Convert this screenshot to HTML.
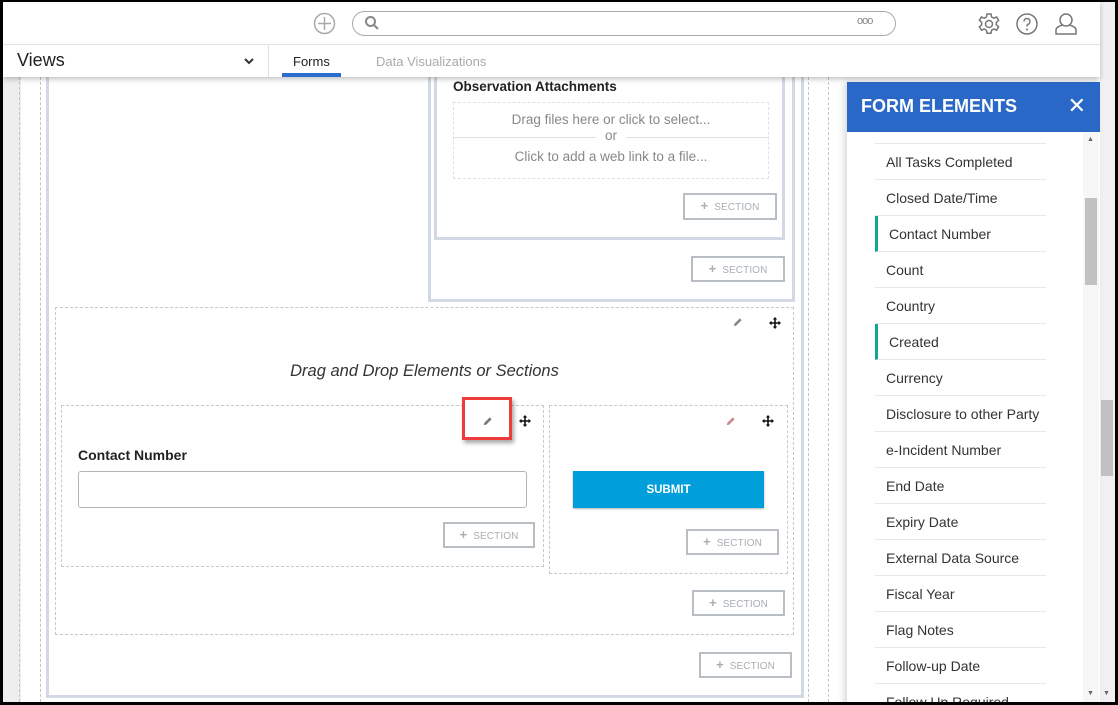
<!DOCTYPE html>
<html><head><meta charset="utf-8"><style>
*{box-sizing:border-box;margin:0;padding:0}
body{width:1118px;height:705px;overflow:hidden;background:#000;font-family:"Liberation Sans",sans-serif;position:relative}
.a{position:absolute}
.sec{position:absolute;border:2px solid #b9bec4;background:#fff;color:#a8aeb4;font-size:10px;text-align:center;line-height:22px;letter-spacing:.1px}
.sec b{font-size:13px;margin-right:6px;color:#a8aeb4}
.dash{position:absolute;border:1px dashed #c8c8c8}
.li{position:absolute;left:875px;width:171px;height:36px;border-bottom:1px solid #e8e8e8;font-size:14px;color:#333;padding-left:11px;line-height:37px}
.li.t{border-left:3px solid #13a58f;padding-left:11px}
</style></head><body>
<svg width="0" height="0" style="position:absolute"><defs>
<symbol id="pen" viewBox="0 0 12 12"><path d="M2 10l.6-2.6L8.5 1.5l2 2-5.9 5.9z" fill="currentColor"/></symbol>
<symbol id="mv" viewBox="0 0 12 12"><path d="M6 0l2.2 2.5H6.8v2.7h2.7V3.8L12 6 9.5 8.2V6.8H6.8v2.7h1.4L6 12 3.8 9.5h1.4V6.8H2.5v1.4L0 6l2.5-2.2v1.4h2.7V2.5H3.8z" fill="currentColor"/></symbol>
</defs></svg>
<div class="a" style="left:3px;top:2px;width:1112px;height:700px;background:#fff;overflow:hidden">
<div class="a" style="left:0;top:75px;width:18px;height:640px;background:#eeeeee"></div>
<div class="a" style="left:16px;top:75px;height:640px;border-left:1px dashed #c4c4c4"></div>
<div class="a" style="left:37px;top:75px;height:640px;border-left:1px dashed #c4c4c4"></div>
<div class="a" style="left:43px;top:60px;width:758px;height:636px;border:3px solid #d3d9e4;border-top:none"></div>
<div class="a" style="left:805px;top:75px;height:640px;border-left:1px dashed #c4c4c4"></div>
<div class="a" style="left:825px;top:75px;height:640px;border-left:1px dashed #c4c4c4"></div>
<div class="a" style="left:1097px;top:0;width:15px;height:700px;background:#f0f0f0"></div>
<div class="a" style="left:1098px;top:398px;width:12px;height:76px;background:#c1c1c1"></div>

<div class="a" style="left:425px;top:60px;width:367px;height:240px;border:3px solid #d3d9e4;border-top:none"></div>
<div class="a" style="left:431px;top:60px;width:351px;height:178px;border:3px solid #d3d9e4;border-top:none"></div>
<div class="a" style="left:450px;top:77px;font-size:13.5px;font-weight:bold;color:#222">Observation Attachments</div>
<div class="dash" style="left:450px;top:100px;width:316px;height:77px;border-color:#e2e2e2"></div>
<div class="a" style="left:450px;top:135px;width:316px;border-top:1px solid #e0e0e0"></div>
<div class="a" style="left:450px;top:110px;width:316px;text-align:center;font-size:13.5px;color:#888">Drag files here or click to select...</div>
<div class="a" style="left:593px;top:126px;width:30px;background:#fff;text-align:center;font-size:13.5px;color:#888">or</div>
<div class="a" style="left:450px;top:147px;width:316px;text-align:center;font-size:13.5px;color:#888">Click to add a web link to a file...</div>
<div class="sec" style="left:680px;top:191px;width:94px;height:27px"><b>+</b>SECTION</div>
<div class="sec" style="left:688px;top:254px;width:94px;height:26px"><b>+</b>SECTION</div>

<div class="dash" style="left:52px;top:305px;width:739px;height:328px"></div>
<svg class="a" style="left:729px;top:315px;color:#888" width="11" height="11"><use href="#pen"/></svg>
<svg class="a" style="left:766px;top:315px;color:#111" width="12" height="12"><use href="#mv"/></svg>
<div class="a" style="left:52px;top:360px;width:739px;text-align:center;font-size:16.5px;font-style:italic;color:#333">Drag and Drop Elements or Sections</div>
<div class="dash" style="left:58px;top:403px;width:483px;height:162px"></div>
<div class="dash" style="left:546px;top:403px;width:239px;height:169px"></div>
<div class="a" style="left:459px;top:395px;width:50px;height:43px;border:3px solid #ee3b3b;box-shadow:2px 3px 4px rgba(0,0,0,.35);background:#fff"></div>
<svg class="a" style="left:479px;top:414px;color:#777" width="11" height="11"><use href="#pen"/></svg>
<svg class="a" style="left:516px;top:413px;color:#111" width="12" height="12"><use href="#mv"/></svg>
<svg class="a" style="left:722px;top:414px;color:#c88" width="11" height="11"><use href="#pen"/></svg>
<svg class="a" style="left:759px;top:413px;color:#111" width="12" height="12"><use href="#mv"/></svg>
<div class="a" style="left:75px;top:445px;font-size:14px;font-weight:bold;color:#222">Contact Number</div>
<div class="a" style="left:75px;top:469px;width:449px;height:37px;border:1px solid #b5b5b5;border-radius:3px"></div>
<div class="sec" style="left:440px;top:520px;width:92px;height:26px"><b>+</b>SECTION</div>
<div class="a" style="left:570px;top:469px;width:191px;height:37px;background:#009fdb;color:#fff;font-weight:bold;font-size:11.5px;text-align:center;line-height:38px;box-shadow:0 1px 2px rgba(0,0,0,.3)">SUBMIT</div>
<div class="sec" style="left:683px;top:527px;width:93px;height:26px"><b>+</b>SECTION</div>
<div class="sec" style="left:689px;top:588px;width:93px;height:26px"><b>+</b>SECTION</div>
<div class="sec" style="left:696px;top:650px;width:93px;height:26px"><b>+</b>SECTION</div>

<div class="a" style="left:844px;top:80px;width:253px;height:630px;background:#fff;box-shadow:-3px 0 6px rgba(0,0,0,.15)"></div>
<div class="a" style="left:844px;top:80px;width:253px;height:50px;background:#2968c6;color:#fff;font-size:18px;font-weight:bold;line-height:48px;padding-left:14px">FORM ELEMENTS<span style="position:absolute;right:14px;top:0;font-size:22px;font-weight:normal">✕</span></div>
<div class="a" style="left:1080px;top:130px;width:16px;height:570px;background:#f6f6f6"></div>
<div class="a" style="left:1082px;top:196px;width:12px;height:87px;background:#c1c1c1"></div>
<div class="a" style="left:1084px;top:134px;font-size:7px;color:#666">▲</div>
<div class="a" style="left:1084px;top:688px;font-size:7px;color:#666">▼</div>
<div class="a" style="left:1100px;top:688px;font-size:7px;color:#666">▼</div>
<div class="a" style="left:844px;top:130px;width:236px;height:570px;overflow:hidden">
<div style="position:relative;left:-847px;top:-131px">
<div class="li" style="top:107px"></div>
<div class="li" style="top:143px">All Tasks Completed</div>
<div class="li" style="top:179px">Closed Date/Time</div>
<div class="li t" style="top:215px">Contact Number</div>
<div class="li" style="top:251px">Count</div>
<div class="li" style="top:287px">Country</div>
<div class="li t" style="top:323px">Created</div>
<div class="li" style="top:359px">Currency</div>
<div class="li" style="top:395px">Disclosure to other Party</div>
<div class="li" style="top:431px">e-Incident Number</div>
<div class="li" style="top:467px">End Date</div>
<div class="li" style="top:503px">Expiry Date</div>
<div class="li" style="top:539px">External Data Source</div>
<div class="li" style="top:575px">Fiscal Year</div>
<div class="li" style="top:611px">Flag Notes</div>
<div class="li" style="top:647px">Follow-up Date</div>
<div class="li" style="top:683px">Follow Up Required</div>
</div></div>

<div class="a" style="left:0;top:0;width:1097px;height:75px;background:#fff;box-shadow:0 2px 5px rgba(0,0,0,.25)"></div>
<div class="a" style="left:0;top:42px;width:1097px;border-top:1px solid #e2e2e2"></div>
<svg class="a" style="left:310px;top:10px" width="23" height="23" viewBox="0 0 23 23"><circle cx="11.5" cy="11.5" r="10" fill="none" stroke="#aaa" stroke-width="1.5"/><path d="M11.5 5v13M5 11.5h13" stroke="#aaa" stroke-width="1.5"/></svg>
<div class="a" style="left:349px;top:9px;width:544px;height:25px;border:1px solid #aaa;border-radius:13px"></div>
<svg class="a" style="left:361px;top:13px" width="16" height="16" viewBox="0 0 16 16"><circle cx="6.5" cy="6.5" r="4.5" fill="none" stroke="#888" stroke-width="2"/><path d="M10 10l4 4" stroke="#888" stroke-width="2"/></svg>
<div class="a" style="left:854px;top:13px;font-size:11px;color:#888;letter-spacing:-1px">ooo</div>
<svg class="a" style="left:974px;top:10px" width="24" height="24" viewBox="0 0 24 24"><circle cx="12" cy="12" r="3.5" fill="none" stroke="#777" stroke-width="1.5"/><path d="M10 2h4l.6 3 2.2 1.2 2.8-1.2 2 3.4-2.3 2v2.4l2.3 2-2 3.4-2.8-1.2-2.2 1.2-.6 3h-4l-.6-3-2.2-1.2-2.8 1.2-2-3.4 2.3-2v-2.4l-2.3-2 2-3.4 2.8 1.2L9.4 5z" fill="none" stroke="#777" stroke-width="1.5"/></svg>
<svg class="a" style="left:1012px;top:10px" width="24" height="24" viewBox="0 0 24 24"><circle cx="12" cy="12" r="10" fill="none" stroke="#777" stroke-width="1.5"/><path d="M9 9.5a3 3 0 1 1 4 2.8c-1 .4-1 1-1 2.2" fill="none" stroke="#777" stroke-width="1.5"/><circle cx="12" cy="17.5" r="1" fill="#777"/></svg>
<svg class="a" style="left:1051px;top:9px" width="24" height="26" viewBox="0 0 24 26"><circle cx="12" cy="9" r="6" fill="none" stroke="#777" stroke-width="1.5"/><path d="M8.5 14c-4 1-6.5 3-6.5 5v4h20v-4c0-2-2.5-4-6.5-5" fill="none" stroke="#777" stroke-width="1.5"/></svg>
<div class="a" style="left:14px;top:48px;font-size:18px;color:#222">Views</div>
<svg class="a" style="left:240px;top:55px" width="12" height="8" viewBox="0 0 12 8"><path d="M2 2l4 4 4-4" fill="none" stroke="#333" stroke-width="2"/></svg>
<div class="a" style="left:265px;top:43px;height:32px;border-left:1px solid #e0e0e0"></div>
<div class="a" style="left:290px;top:52px;font-size:13px;color:#222">Forms</div>
<div class="a" style="left:279px;top:71px;width:59px;height:4px;background:#2b6ccf"></div>
<div class="a" style="left:373px;top:52px;font-size:13px;color:#aaa">Data Visualizations</div>
</div>
</body></html>
